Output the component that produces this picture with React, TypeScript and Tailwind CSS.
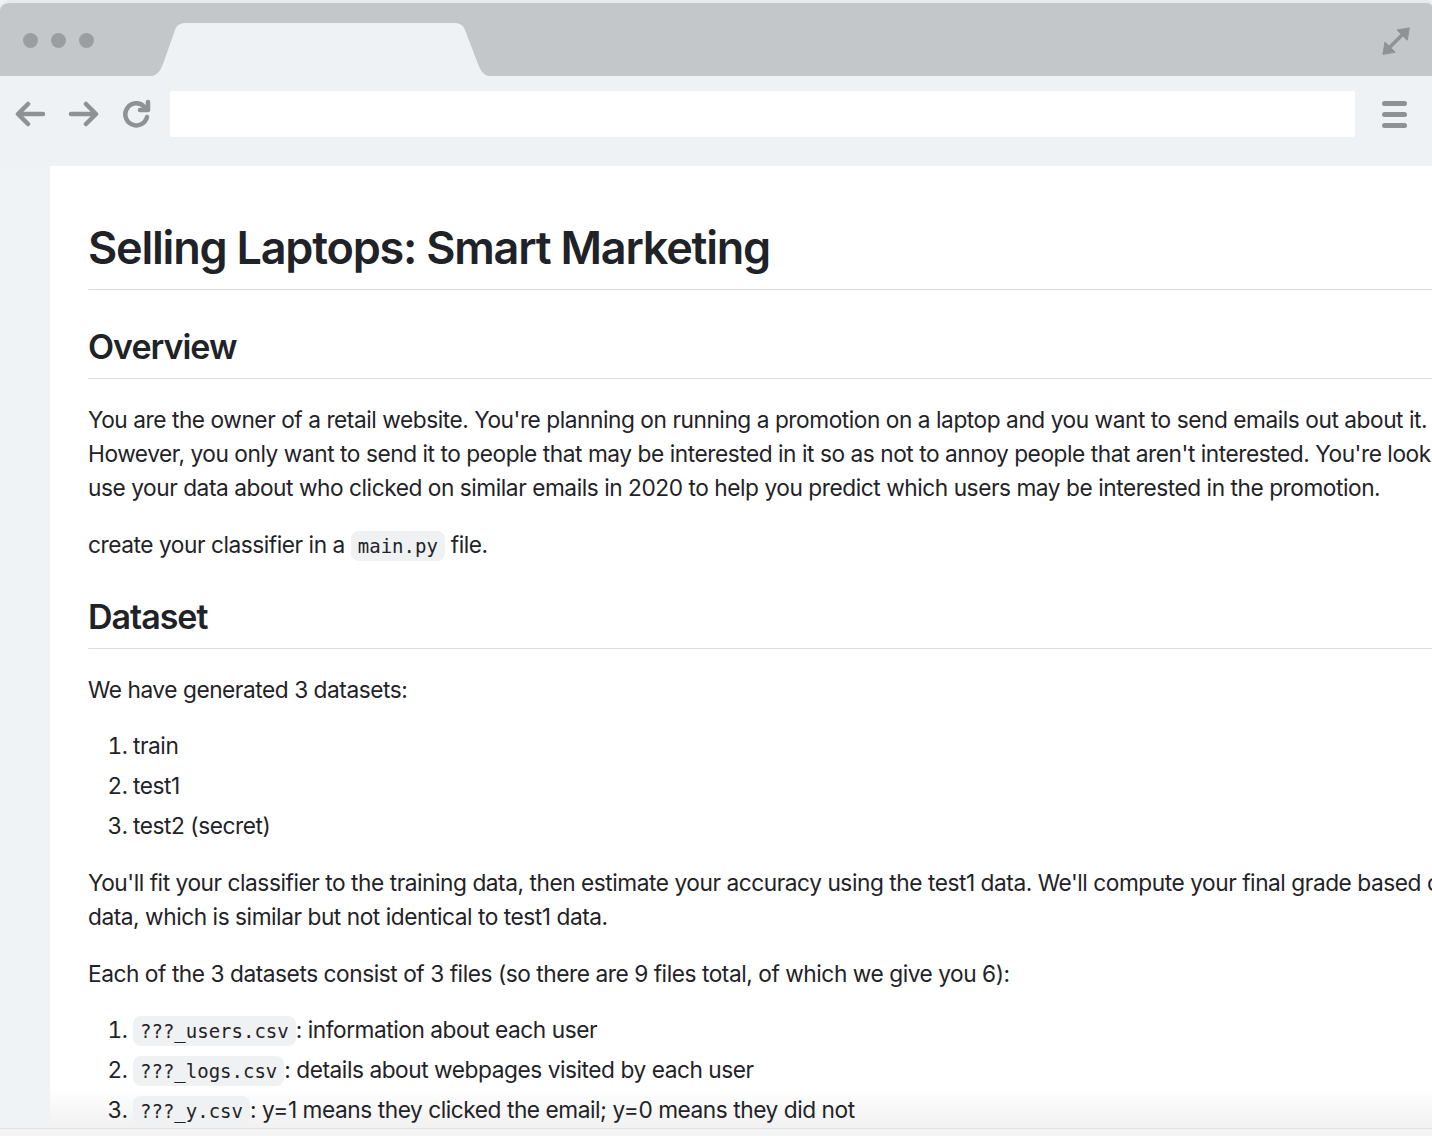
import type { ReactNode } from 'react';

const sans = { fontFamily: 'Inter, "Noto Sans", "Liberation Sans", sans-serif' };

function Code({ children }: { children: ReactNode }) {
  return (
    <code className="rounded-[8px] bg-[#eff1f3] px-[7px] py-[4px] font-['DejaVu_Sans_Mono',monospace] text-[19px] leading-[20px] tracking-normal text-[#1f2328]">
      {children}
    </code>
  );
}

function Heading({ children, big }: { children: ReactNode; big?: boolean }) {
  return (
    <h2
      className={`border-b border-[#d8dee4] font-semibold text-[#1f2328] ${
        big ? 'pb-[13px] text-[45px] leading-[57px] tracking-[-0.027em]' : 'pb-[10px] text-[34px] leading-[42px] tracking-[-0.03em]'
      }`}
    >
      {children}
    </h2>
  );
}

function Toolbar() {
  return (
    <div className="flex h-[90px] items-start bg-[#eef2f5] pt-[15px]">
      <div className="flex h-[46px] w-[170px] items-center gap-[22px] pl-[15px] text-[#8f9295]">
        <svg width="31" height="28" viewBox="0 0 31 28" fill="none" stroke="currentColor" strokeWidth="4.5" strokeLinecap="round" strokeLinejoin="round">
          <path d="M28 14H4M13 4 3 14l10 10" />
        </svg>
        <svg width="31" height="28" viewBox="0 0 31 28" fill="none" stroke="currentColor" strokeWidth="4.5" strokeLinecap="round" strokeLinejoin="round">
          <path d="M3 14h24M18 4l10 10-10 10" />
        </svg>
        <svg width="32" height="32" viewBox="0 0 32 32" fill="none" stroke="currentColor" strokeWidth="4.5" strokeLinecap="round" strokeLinejoin="round">
          <path d="M26 19a11 11 0 1 1-2.5-10" />
          <path d="M27 4v8h-8" />
        </svg>
      </div>
      <div className="h-[46px] w-[1185px] rounded-[2px] bg-white" />
      <div className="flex h-[46px] flex-1 flex-col items-center justify-center gap-[6px] pl-[2px]">
        <span className="h-[5px] w-[25px] rounded-full bg-[#8f9295]" />
        <span className="h-[5px] w-[25px] rounded-full bg-[#8f9295]" />
        <span className="h-[5px] w-[25px] rounded-full bg-[#8f9295]" />
      </div>
    </div>
  );
}

function TabBar() {
  return (
    <div className="relative h-[76px] rounded-tl-[10px] rounded-tr-[6px] border-t-[3px] border-[#e8e9ea] bg-[#c4c7ca]">
      <div className="flex items-center gap-[13px] pl-[23px] pt-[30px]">
        <span className="h-[15px] w-[15px] rounded-full bg-[#9b9ea1]" />
        <span className="h-[15px] w-[15px] rounded-full bg-[#9b9ea1]" />
        <span className="h-[15px] w-[15px] rounded-full bg-[#9b9ea1]" />
      </div>
      <svg className="absolute left-[146px] top-[19px]" width="348" height="55" viewBox="0 0 348 55">
        <path
          d="M0 55 C10 55 14 50 17 42 L29 8 C31 3 34 1 40 1 L308 1 C314 1 317 3 319 8 L332 42 C335 50 339 55 348 55 Z"
          fill="#eef2f5"
        />
      </svg>
      <svg className="absolute left-[1380px] top-[22px]" width="32" height="32" viewBox="0 0 32 32" fill="#8f9295" stroke="#8f9295" strokeWidth="3.5" strokeLinecap="round">
        <path d="M8 24 24 8" />
        <path d="M29 3 17 5l10 10z" strokeWidth="1" />
        <path d="M3 29l2-12 10 10z" strokeWidth="1" />
      </svg>
    </div>
  );
}

export default function App() {
  return (
    <div className="relative h-[1136px] w-[1432px] overflow-hidden bg-[#eef2f5]" style={sans}>
      <TabBar />
      <Toolbar />
      <div className="flex h-[962px]">
        <div className="w-[50px] bg-[#f0f3f6]" />
        <div className="flex-1 overflow-hidden bg-[linear-gradient(to_bottom,#ffffff_calc(100%-40px),#f1f1f1)]">
          <article className="w-[1500px] pl-[38px] pt-[53px] text-[22.7px] leading-[34px] tracking-[-0.02em] text-[#1f2328]">
            <Heading big>Selling Laptops: Smart Marketing</Heading>
            <div className="mt-[36px]">
              <Heading>Overview</Heading>
            </div>
            <p className="mt-[24px] whitespace-nowrap">
              You are the owner of a retail website. You're planning on running a promotion on a laptop and you want to send emails out about it.
              <br />
              However, you only want to send it to people that may be interested in it so as not to annoy people that aren't interested. You're looking to
              <br />
              use your data about who clicked on similar emails in 2020 to help you predict which users may be interested in the promotion.
            </p>
            <p className="mt-[23px]">
              create your classifier in a <Code>main.py</Code> file.
            </p>
            <div className="mt-[34px]">
              <Heading>Dataset</Heading>
            </div>
            <p className="mt-[24px]">We have generated 3 datasets:</p>
            <ol className="mt-[22px] list-decimal space-y-[6px] pl-[45px]">
              <li>train</li>
              <li>test1</li>
              <li>test2 (secret)</li>
            </ol>
            <p className="mt-[23px] whitespace-nowrap">
              You'll fit your classifier to the training data, then estimate your accuracy using the test1 data. We'll compute your final grade based on test2
              <br />
              data, which is similar but not identical to test1 data.
            </p>
            <p className="mt-[23px]">Each of the 3 datasets consist of 3 files (so there are 9 files total, of which we give you 6):</p>
            <ol className="mt-[22px] list-decimal space-y-[6px] pl-[45px]">
              <li>
                <Code>???_users.csv</Code>: information about each user
              </li>
              <li>
                <Code>???_logs.csv</Code>: details about webpages visited by each user
              </li>
              <li>
                <Code>???_y.csv</Code>: y=1 means they clicked the email; y=0 means they did not
              </li>
            </ol>
          </article>
        </div>
      </div>
      <div className="absolute bottom-0 left-0 right-0 h-[8px] border-t border-[#e2e2e2] bg-[#f4f4f4]" />
    </div>
  );
}
